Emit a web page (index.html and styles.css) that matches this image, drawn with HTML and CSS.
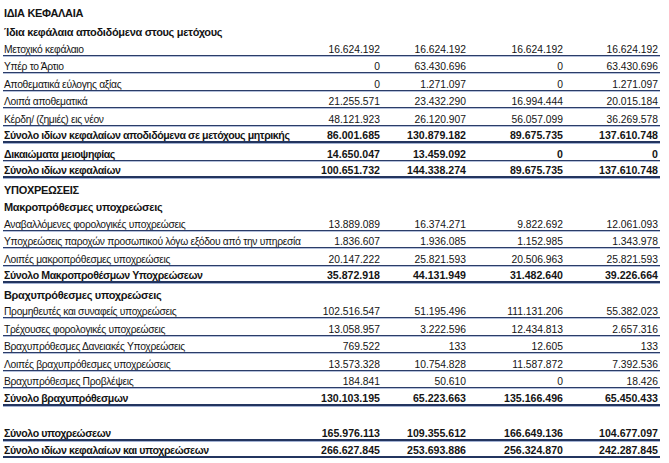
FILE: index.html
```html
<!DOCTYPE html>
<html lang="el">
<head>
<meta charset="utf-8">
<title>Ίδια κεφάλαια και υποχρεώσεις</title>
<link rel="stylesheet" href="styles.css">
</head>
<body>
<div class="sheet">
  <div class="row head h1"><span class="lbl">ΙΔΙΑ ΚΕΦΑΛΑΙΑ</span></div>
  <div class="row head"><span class="lbl">Ίδια κεφάλαια αποδιδόμενα στους μετόχους</span></div>
  <div class="row line"><span class="lbl">Μετοχικό κεφάλαιο</span><span>16.624.192</span><span>16.624.192</span><span>16.624.192</span><span>16.624.192</span></div>
  <div class="row line"><span class="lbl">Υπέρ το Άρτιο</span><span>0</span><span>63.430.696</span><span>0</span><span>63.430.696</span></div>
  <div class="row line"><span class="lbl">Αποθεματικά εύλογης αξίας</span><span>0</span><span>1.271.097</span><span>0</span><span>1.271.097</span></div>
  <div class="row line"><span class="lbl">Λοιπά αποθεματικά</span><span>21.255.571</span><span>23.432.290</span><span>16.994.444</span><span>20.015.184</span></div>
  <div class="row line"><span class="lbl">Κέρδη/ (ζημιές) εις νέον</span><span>48.121.923</span><span>26.120.907</span><span>56.057.099</span><span>36.269.578</span></div>
  <div class="row tot"><span class="lbl">Σύνολο ιδίων κεφαλαίων αποδιδόμενα σε μετόχους μητρικής</span><span>86.001.685</span><span>130.879.182</span><span>89.675.735</span><span>137.610.748</span></div>
  <div class="row line bold"><span class="lbl">Δικαιώματα μειοψηφίας</span><span>14.650.047</span><span>13.459.092</span><span>0</span><span>0</span></div>
  <div class="row tot"><span class="lbl">Σύνολο ιδίων κεφαλαίων</span><span>100.651.732</span><span>144.338.274</span><span>89.675.735</span><span>137.610.748</span></div>
  <div class="row head"><span class="lbl">ΥΠΟΧΡΕΩΣΕΙΣ</span></div>
  <div class="row head"><span class="lbl">Μακροπρόθεσμες υποχρεώσεις</span></div>
  <div class="row line"><span class="lbl">Αναβαλλόμενες φορολογικές υποχρεώσεις</span><span>13.889.089</span><span>16.374.271</span><span>9.822.692</span><span>12.061.093</span></div>
  <div class="row line"><span class="lbl">Υποχρεώσεις παροχών προσωπικού λόγω εξόδου από την υπηρεσία</span><span>1.836.607</span><span>1.936.085</span><span>1.152.985</span><span>1.343.978</span></div>
  <div class="row line"><span class="lbl">Λοιπές μακροπρόθεσμες υποχρεώσεις</span><span>20.147.222</span><span>25.821.593</span><span>20.506.963</span><span>25.821.593</span></div>
  <div class="row tot"><span class="lbl">Σύνολο Μακροπροθέσμων Υποχρεώσεων</span><span>35.872.918</span><span>44.131.949</span><span>31.482.640</span><span>39.226.664</span></div>
  <div class="row head"><span class="lbl">Βραχυπρόθεσμες υποχρεώσεις</span></div>
  <div class="row line"><span class="lbl">Προμηθευτές και συναφείς υποχρεώσεις</span><span>102.516.547</span><span>51.195.496</span><span>111.131.206</span><span>55.382.023</span></div>
  <div class="row line"><span class="lbl">Τρέχουσες φορολογικές υποχρεώσεις</span><span>13.058.957</span><span>3.222.596</span><span>12.434.813</span><span>2.657.316</span></div>
  <div class="row line"><span class="lbl">Βραχυπρόθεσμες Δανειακές Υποχρεώσεις</span><span>769.522</span><span>133</span><span>12.605</span><span>133</span></div>
  <div class="row line"><span class="lbl">Λοιπές βραχυπρόθεσμες υποχρεώσεις</span><span>13.573.328</span><span>10.754.828</span><span>11.587.872</span><span>7.392.536</span></div>
  <div class="row line"><span class="lbl">Βραχυπρόθεσμες Προβλέψεις</span><span>184.841</span><span>50.610</span><span>0</span><span>18.426</span></div>
  <div class="row tot"><span class="lbl">Σύνολο βραχυπρόθεσμων</span><span>130.103.195</span><span>65.223.663</span><span>135.166.496</span><span>65.450.433</span></div>
  <div class="row blank"></div>
  <div class="row tot"><span class="lbl">Σύνολο υποχρεώσεων</span><span>165.976.113</span><span>109.355.612</span><span>166.649.136</span><span>104.677.097</span></div>
  <div class="row tot"><span class="lbl">Σύνολο ιδίων κεφαλαίων και υποχρεώσεων</span><span>266.627.845</span><span>253.693.886</span><span>256.324.870</span><span>242.287.845</span></div>
</div>
</body>
</html>
```

FILE: styles.css
```css
html, body {
  margin: 0;
  background: #ffffff;
}

body {
  font-family: "Liberation Sans", Arial, sans-serif;
  color: #141414;
}

.sheet {
  width: 657px;
  padding: 3px 0 0 3px;
}

.row {
  display: grid;
  grid-template-columns: 290px 89px 86px 97px 95px;
  align-items: end;
  height: 17.5px;
  box-sizing: border-box;
  font-size: 10.3px;
  line-height: 11px;
}

.row span {
  text-align: right;
  padding-right: 2px;
  white-space: nowrap;
}

.row .lbl {
  text-align: left;
  padding-left: 1px;
  letter-spacing: -0.32px;
}

.head {
  font-weight: bold;
  font-size: 11px;
}

.h1 {
  padding-bottom: 2px;
}

.line {
  border-bottom: 1px solid #2b3c68;
  box-shadow: 0 1px 0 #b3bfda;
}

.tot {
  font-weight: bold;
  font-size: 10.6px;
  border-bottom: 2px solid #23355f;
  box-shadow: 0 1px 0 #a3b2d3;
}

.tot .lbl {
  letter-spacing: -0.4px;
}

.bold {
  font-weight: bold;
  font-size: 10.6px;
}

.bold .lbl {
  letter-spacing: -0.4px;
}
```
